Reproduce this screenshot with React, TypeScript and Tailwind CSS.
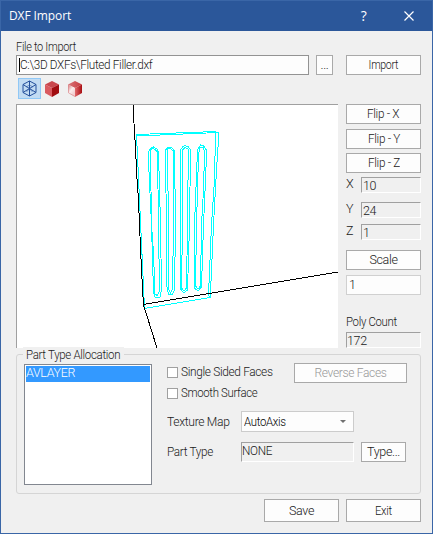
import type { ReactNode } from 'react';

function Button({ children, className = '' }: { children: ReactNode; className?: string }) {
  return (
    <button className={`flex shrink-0 items-center justify-center border border-[#a9a9a9] bg-[#fdfdfd] whitespace-nowrap ${className}`}>
      {children}
    </button>
  );
}

function Sunken({ children, className = '' }: { children: ReactNode; className?: string }) {
  return (
    <div className={`border border-t-[#a0a0a0] border-r-white border-b-white border-l-[#a0a0a0] whitespace-nowrap ${className}`}>
      {children}
    </div>
  );
}

/* Text narrowed horizontally, anchored at its left edge unless told otherwise. */
function Narrow({ children, className = 'origin-left scale-x-[.94]' }: { children: ReactNode; className?: string }) {
  return <span className={`inline-block whitespace-nowrap ${className}`}>{children}</span>;
}

function Coord({ axis, value, className = '' }: { axis: string; value: string; className?: string }) {
  return (
    <div className={`flex h-4 ${className}`}>
      <span className="w-[15px] leading-[14px]">{axis}</span>
      <Sunken className="w-[60px] pl-px leading-[15px]">{value}</Sunken>
    </div>
  );
}

function Cube({ shaded = false }: { shaded?: boolean }) {
  return (
    <svg width="16" height="18" viewBox="0 0 16 18">
      <defs>
        <linearGradient id="shade" x1="0" y1="0.1" x2="0.6" y2="0.9">
          <stop offset="0" stopColor="#dd8084" />
          <stop offset="0.55" stopColor="#fbeeee" />
          <stop offset="1" stopColor="#f3cfd0" />
        </linearGradient>
        <linearGradient id="shadeTop" x1="0" y1="0" x2="1" y2="0">
          <stop offset="0" stopColor="#d9777a" />
          <stop offset="1" stopColor="#c8383d" />
        </linearGradient>
        <linearGradient id="shadeRight" x1="0" y1="0" x2="1" y2="0">
          <stop offset="0" stopColor="#e0686b" />
          <stop offset="1" stopColor="#a80d11" />
        </linearGradient>
      </defs>
      <path d="M8 1 15 4.5 8 8 1 4.5Z" fill={shaded ? 'url(#shadeTop)' : '#c9474d'} />
      <path d="M1 4.5 8 8V17L1 13Z" fill={shaded ? 'url(#shade)' : '#d95a60'} />
      <path d="M15 4.5 8 8V17L15 13Z" fill={shaded ? 'url(#shadeRight)' : '#a00c10'} />
      {shaded && <path d="M1.5 4.7V12.8L8 16.5" fill="none" stroke="#d98c8f" strokeWidth=".7" />}
    </svg>
  );
}

function Scene() {
  return (
    <svg width="321" height="243" viewBox="17 105 321 243" shapeRendering="crispEdges" fill="none" strokeWidth="1">
      <g stroke="#00ffff">
        <path d="M136.5 134.5 216.5 131.5M210.5 297.5 144.5 308.5 136.5 134.5" />
        <path d="M136.5 136 218.5 132.5V140L216.5 170 213.5 225 210.5 293V298" />
        <path d="M215.5 133 214.5 180 211.5 225 208.5 295.5 210.5 298" />
        <path d="M148.5 161V152L150.5 148.5 153.5 147 157 149 158.5 152 160.5 225 161.5 290 160 297 155 297 153.5 292 151.5 225Z" />
        <path d="M150.5 161V150L153 148.5 155 149.5 157.5 152 158.5 225 159.5 291 157 295.5 155 294 153.5 253 151.5 225 150.5 155" />
        <path d="M165.5 161V150L168 147 171 147 174.5 151 175.5 225 174.5 290 172 295 168.5 294 166.5 285 166.5 225Z" />
        <path d="M167.5 161V149L170 148.5 173.5 151V225L172.5 289 170.5 293 168.5 289 168.5 225 167.5 155" />
        <path d="M180.5 225V150L182.5 147 185 145.5 188.5 147 190.5 150 189.5 225 187.5 290 184 293 180.5 289Z" />
        <path d="M182.5 225V150L185 147.5 188 149V180L187.5 225 186.5 288 184 291 181.5 288Z" />
        <path d="M197.5 150 200.5 145 203.5 146 206.5 150V155L205.5 180 203.5 225 201.5 287 198 291 194.5 288 194.5 225Z" />
        <path d="M198.5 155 200 147 203 147 204.5 152 203.5 190 201.5 225 200.5 286 198 289 195.5 286 196.5 225Z" />
      </g>
      <g stroke="#000">
        <path d="M133.5 105V112L134.5 134 135.5 145 136.5 172 138.5 200 139.5 225 141.5 270 143.5 305 157 348" />
        <path d="M143 304.5 338 272" />
      </g>
    </svg>
  );
}

export default function App() {
  return (
    <div className="flex h-[534px] w-[433px] flex-col border border-[#3a66a7] bg-[#f0f0f0] font-['Roboto',sans-serif] text-[12.5px] leading-4 font-light tracking-[-0.35px] text-[#202020]">
      <header className="flex h-[30px] shrink-0 items-center bg-[#2b579a] pl-2 text-white">
        <h1 className="font-['Open_Sans',sans-serif] text-[12px] font-normal tracking-[-0.1px]">DXF Import</h1>
        <span className="ml-auto w-[43px] text-center font-['Open_Sans',sans-serif] text-[14px] font-normal">?</span>
        <svg className="mr-[18px] ml-[19px]" width="10" height="10" viewBox="0 0 10 10" stroke="#fff" strokeWidth="1.2">
          <path d="M.5.5 9.5 9.5M9.5.5.5 9.5" />
        </svg>
      </header>

      <main className="flex flex-col pt-2 pr-[11px] pl-[15px]">
        <label className="h-4"><Narrow className="-mt-px origin-left scale-x-[.88]">File to Import</Narrow></label>
        <div className="flex h-5">
          <div className="flex w-[293px] items-center border border-[#939393] bg-[#fdfdfd] pl-0.5">
            <span className="h-3.5 w-px bg-black" />
            <Narrow>C:\3D DXFs\Fluted Filler.dxf</Narrow>
          </div>
          <Button className="ml-[7px] w-[17px]">...</Button>
          <Button className="ml-[13px] w-[75px]"><Narrow className="scale-x-[.85]">Import</Narrow></Button>
        </div>

        <div className="flex h-[29px] items-start pt-[3px] pl-0.5">
          <div className="flex h-[21px] w-[23px] items-center justify-center border border-[#90c8f6] bg-[#c2dcf3]">
            <svg width="15" height="17" viewBox="0 0 15 17" fill="none" stroke="#24509c">
              <path d="M7.5 1 14 4.5V12.5L7.5 16 1 12.5V4.5Z" />
              <path d="M7.5 1V16M1 4.5 14 12.5M14 4.5 1 12.5" />
              <path d="M4 7 7.5 5 11 7M4.5 12 7.5 8.5 10.5 12" strokeWidth=".5" />
            </svg>
          </div>
          <div className="ml-[3px] pt-0.5"><Cube /></div>
          <div className="ml-[7px] pt-0.5"><Cube shaded /></div>
        </div>

        <div className="flex h-[244px]">
          <div className="w-[322px] border-t border-l border-[#a0a0a0] bg-white">
            <Scene />
          </div>
          <div className="ml-2 flex w-[75px] flex-col">
            <Button className="h-5"><Narrow className="scale-x-[.94]">Flip - X</Narrow></Button>
            <Button className="mt-[5px] h-5"><Narrow className="scale-x-[.94]">Flip - Y</Narrow></Button>
            <Button className="mt-1 h-5"><Narrow className="scale-x-[.94]">Flip - Z</Narrow></Button>
            <Coord axis="X" value="10" className="mt-1" />
            <Coord axis="Y" value="24" className="mt-[9px]" />
            <Coord axis="Z" value="1" className="mt-1.5" />
            <Button className="mt-2.5 h-5">Scale</Button>
            <div className="mt-[5px] h-5 border border-[#d0d0d0] bg-[#fdfdfd] pl-0.5 leading-[18px]">1</div>
            <span className="mt-[19px] h-[18px]"><Narrow className="origin-left scale-x-[.91]">Poly Count</Narrow></span>
            <Sunken className="h-4 leading-[15px]">172</Sunken>
          </div>
        </div>

        <section className="mt-1.5 h-[140px] w-[405px] rounded-[3px] border border-[#d5d5d5]">
          <h2 className="-mt-2 ml-1.5 w-[101px] bg-[#f0f0f0] pl-[3px] font-light">
            <Narrow className="origin-left scale-x-[.92]">Part Type Allocation</Narrow>
          </h2>
          <div className="flex pt-px pl-[7px]">
            <div className="h-[121px] w-32 border border-[#828790] bg-white p-px">
              <div className="h-4 bg-[#3399ff] leading-[14px] text-white">AVLAYER</div>
            </div>
            <div className="ml-[15px] flex w-[240px] flex-col">
              <div className="flex h-[21px]">
                <span className="mt-[3px] mr-[3px] size-[11px] border border-[#a0a0a0] bg-white" />
                <span className="w-[113px]"><Narrow className="origin-left scale-x-[.95]">Single Sided Faces</Narrow></span>
                <Button className="-mt-px h-5 w-[113px] text-[#989898]"><Narrow className="scale-x-[.96]">Reverse Faces</Narrow></Button>
              </div>
              <div className="flex">
                <span className="mt-[3px] mr-[3px] size-[11px] border border-[#a0a0a0] bg-white" />
                <Narrow className="origin-left scale-x-[.91]">Smooth Surface</Narrow>
              </div>
              <div className="mt-[10px] flex h-[21px]">
                <span className="w-[74px] leading-[21px]"><Narrow className="origin-left scale-x-[.97]">Texture Map</Narrow></span>
                <div className="flex w-[113px] items-center justify-between border border-[#cccccc] bg-[#fdfdfd] pr-[7px] pl-0.5 text-black">
                  <Narrow className="origin-left scale-x-[.91]">AutoAxis</Narrow>
                  <span className="border-x-[3px] border-t-[3px] border-x-transparent border-t-[#707070]" />
                </div>
              </div>
              <div className="mt-2.5 flex h-5">
                <span className="w-[74px] leading-5"><Narrow>Part Type</Narrow></span>
                <Sunken className="w-[113px] leading-[15px]"><Narrow>NONE</Narrow></Sunken>
                <Button className="ml-[7px] w-[45px]">Type...</Button>
              </div>
            </div>
          </div>
        </section>

        <footer className="mt-[5px] flex h-[23px] justify-end gap-[7px]">
          <Button className="w-[75px]">Save</Button>
          <Button className="w-[75px]"><Narrow className="scale-x-[.9]">Exit</Narrow></Button>
        </footer>
      </main>
    </div>
  );
}
